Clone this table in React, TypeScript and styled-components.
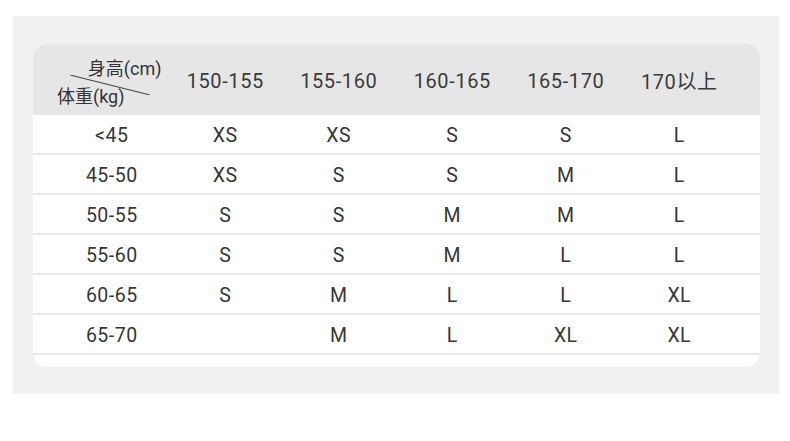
import React from "react";
import styled, { createGlobalStyle } from "styled-components";

const heights = ["150-155", "155-160", "160-165", "165-170", "170以上"];

const rows: { weight: string; sizes: string[] }[] = [
  { weight: "<45", sizes: ["XS", "XS", "S", "S", "L"] },
  { weight: "45-50", sizes: ["XS", "S", "S", "M", "L"] },
  { weight: "50-55", sizes: ["S", "S", "M", "M", "L"] },
  { weight: "55-60", sizes: ["S", "S", "M", "L", "L"] },
  { weight: "60-65", sizes: ["S", "M", "L", "L", "XL"] },
  { weight: "65-70", sizes: ["", "M", "L", "XL", "XL"] },
];

export default function App() {
  return (
    <>
      <GlobalStyle />
      <Panel>
        <Table>
          <HeaderRow>
            <CornerCell>
              <DiagonalLine viewBox="0 0 80 20" preserveAspectRatio="none">
                <line x1="0" y1="0" x2="80" y2="20" stroke="#3c3c3c" strokeWidth="1" />
              </DiagonalLine>
              <CornerTop>身高(cm)</CornerTop>
              <CornerBottom>体重(kg)</CornerBottom>
            </CornerCell>
            {heights.map((h) => (
              <HeadCell key={h}>{h}</HeadCell>
            ))}
          </HeaderRow>
          {rows.map((row) => (
            <BodyRow key={row.weight}>
              <Cell>{row.weight}</Cell>
              {row.sizes.map((s, i) => (
                <Cell key={i}>{s}</Cell>
              ))}
            </BodyRow>
          ))}
        </Table>
      </Panel>
    </>
  );
}

const GlobalStyle = createGlobalStyle`
  body {
    margin: 0;
    background: #ffffff;
    font-family: Roboto, "Noto Sans CJK SC", sans-serif;
    color: #333333;
  }
`;

const Panel = styled.main`
  box-sizing: border-box;
  width: 766px;
  height: 378px;
  margin: 16px 0 0 13px;
  padding: 28px 19px 0 20px;
  background: #f1f1f1;
`;

const Table = styled.section`
  background: #ffffff;
  border-radius: 14px;
  overflow: hidden;
  padding-bottom: 12px;
`;

const grid = `
  display: grid;
  grid-template-columns: repeat(6, 1fr);
  padding: 0 24px 0 22px;
`;

const HeaderRow = styled.div`
  ${grid}
  height: 71px;
  background: #e6e6e6;
  align-items: center;
`;

const HeadCell = styled.div`
  text-align: center;
  font-size: 20px;
  letter-spacing: 0.6px;
  color: #3a3a3a;
  padding-top: 2px;
`;

const CornerCell = styled.div`
  position: relative;
  align-self: stretch;
  display: flex;
  flex-direction: column;
  padding: 11px 7px 0 2px;
  font-size: 18px;
  line-height: 28px;
  color: #333333;
`;

const CornerTop = styled.span`
  align-self: flex-end;
`;

const CornerBottom = styled.span`
  align-self: flex-start;
`;

const DiagonalLine = styled.svg`
  position: absolute;
  left: 15px;
  top: 31px;
  width: 80px;
  height: 20px;
`;

const BodyRow = styled.div`
  ${grid}
  height: 38px;
  border-bottom: 2px solid #e8e8e8;
  align-items: center;
`;

const Cell = styled.div`
  text-align: center;
  font-size: 19.5px;
  letter-spacing: 0.5px;
  color: #363636;
  padding-top: 2px;
`;
